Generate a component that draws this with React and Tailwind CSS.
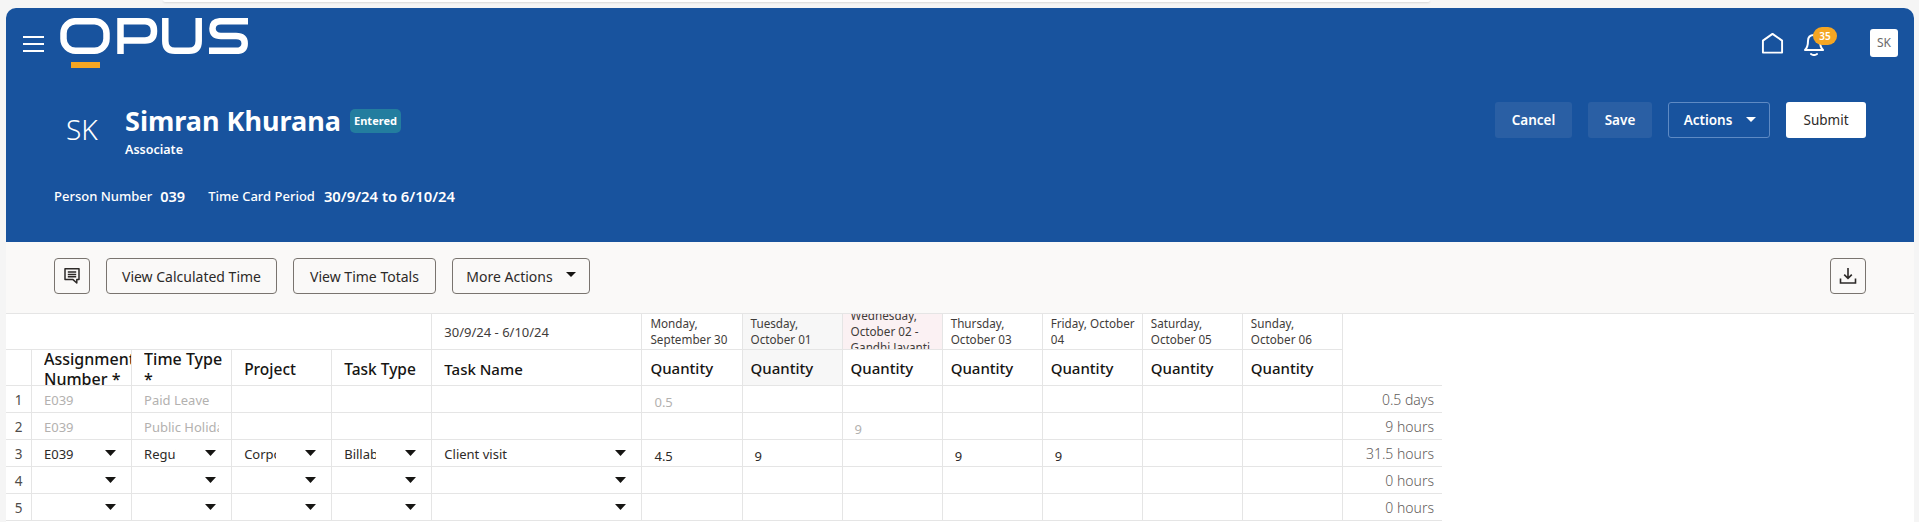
import React from "react";

const Caret = ({ className = "", w = 11, h = 6 }) => (
  <svg width={w} height={h} viewBox="0 0 11 6" preserveAspectRatio="none" className={className}>
    <path d="M0 0H11L5.5 6Z" fill="currentColor" />
  </svg>
);

const Logo = () => (
  <svg width="190" height="52" viewBox="0 0 190 52" fill="none">
    <g stroke="#ffffff" strokeWidth="6.5">
      <rect x="3.5" y="3.2" width="43" height="29.6" rx="12" />
      <path d="M60.5 36V3.2H85Q94 3.2 94 13Q94 22.5 85 22.5H60.5" />
      <path d="M105.3 0V23Q105.3 32.8 115 32.8H129Q138.7 32.8 138.7 23V0" />
      <path d="M188 3.2H161Q152.5 3.2 152.5 10.6Q152.5 18 161 18H176Q184.7 18 184.7 25.4Q184.7 32.8 176 32.8H149" />
    </g>
    <rect x="11" y="44" width="29" height="6" fill="#f5a623" />
  </svg>
);

const HeaderButton = ({ className, children }) => (
  <button className={`h-[36px] rounded-[3px] text-[13.5px] font-semibold flex items-center justify-center ${className}`}>
    {children}
  </button>
);

const ToolButton = ({ className = "", children }) => (
  <button className={`h-[36px] rounded-[4px] border border-[#79746f] bg-[#faf9f8] text-[14px] text-[#2d2a28] flex items-center justify-center ${className}`}>
    {children}
  </button>
);

const days = [
  { label: "Monday, September 30" },
  { label: "Tuesday, October 01", bg: "bg-[#f7f7f7]" },
  { label: "Wednesday, October 02 - Gandhi Jayanti", bg: "bg-[#fbf1f3]" },
  { label: "Thursday, October 03" },
  { label: "Friday, October 04" },
  { label: "Saturday, October 05" },
  { label: "Sunday, October 06" },
];

const rows = [
  { n: 1, ro: true, a: "E039", t: "Paid Leave", q: ["0.5", "", "", "", "", "", ""], total: "0.5 days" },
  { n: 2, ro: true, a: "E039", t: "Public Holiday", q: ["", "", "9", "", "", "", ""], total: "9 hours" },
  { n: 3, a: "E039", t: "Regular", p: "Corporate", k: "Billable", name: "Client visit", q: ["4.5", "9", "", "9", "9", "", ""], total: "31.5 hours" },
  { n: 4, a: "", t: "", p: "", k: "", name: "", q: ["", "", "", "", "", "", ""], total: "0 hours" },
  { n: 5, a: "", t: "", p: "", k: "", name: "", q: ["", "", "", "", "", "", ""], total: "0 hours" },
];

const line = "border-r border-b border-[#e5e5e5]";

const SelectCell = ({ value, textW }) => (
  <td className={`${line} p-0`}>
    <div className="h-[26px] pl-[12px] pr-[15px] flex items-center justify-between text-[13px] text-[#2d2a28]">
      <span className="block overflow-hidden whitespace-nowrap pt-[4px]" style={{ width: textW }}>{value}</span>
      <Caret className="text-[#161513] mb-[1px] shrink-0" />
    </div>
  </td>
);

const PlainCell = ({ value, width = "" }) => (
  <td className={`${line} p-0`}>
    <div className="h-[26px] px-[12px] pt-[4px] flex items-center text-[13px] text-[#b3b1af]">
      <span className={`block overflow-hidden whitespace-nowrap ${width}`}>{value}</span>
    </div>
  </td>
);

const Head = ({ children, size = "text-[15px]" }) => (
  <th className={`${line} p-0 text-left font-medium`}>
    <div className={`h-[35px] pl-[12px] pt-[2px] flex items-center ${size} leading-[20px] text-[#161513] overflow-hidden`}>
      <span>{children}</span>
    </div>
  </th>
);

export default function App() {
  return (
    <div className="w-full h-[522px] overflow-hidden bg-[#f5f5f5] pl-[6px] pr-[5px] text-white" style={{ fontFamily: '"Noto Sans", sans-serif' }}>
      <div className="h-[8px] pl-[157px]">
        <div className="w-[1267px] h-[2px] bg-white rounded-b-[6px] shadow-[0_1px_2px_rgba(0,0,0,0.12)]" />
      </div>
      <header className="h-[234px] bg-[#18539e] rounded-t-[10px] pr-[16px]">
        <div className="h-[62px] flex items-start">
          <div className="ml-[17px] mt-[28px] w-[21px] flex flex-col gap-[5px]">
            <span className="h-[2px] bg-white" />
            <span className="h-[2px] bg-white" />
            <span className="h-[2px] bg-white" />
          </div>
          <div className="ml-[16px] mt-[10px]">
            <Logo />
          </div>
          <div className="ml-auto mt-[21px] flex items-start">
            <svg width="23" height="22" viewBox="0 0 24 22" fill="none" stroke="#fff" strokeWidth="2" className="mt-[3px]">
              <path d="M2 21V8.5L12 1.5L22 8.5V21Z" strokeLinejoin="round" />
            </svg>
            <div className="relative ml-[20px] mr-[46px] w-[20px] h-[24px] mt-[3px]">
              <svg width="20" height="24" viewBox="0 0 20 24" fill="none" stroke="#fff" strokeWidth="2" strokeLinecap="round">
                <path d="M1 18C3 16 4 14 4 9C4 5 6 3 10 3C14 3 16 5 16 9C16 14 17 16 19 18Z" strokeLinejoin="round" />
                <path d="M7 22C9 23.4 11 23.4 13 22" />
              </svg>
              <span className="absolute left-[9px] top-[-5px] w-[24px] h-[18px] rounded-full bg-[#f5a623] text-white text-[10px] font-semibold flex items-center justify-center">35</span>
            </div>
            <div className="w-[28px] h-[28px] rounded-[3px] bg-white text-[#6b6b6b] text-[12px] flex items-center justify-center">SK</div>
          </div>
        </div>
        <div className="h-[94px] flex items-start pr-[32px]">
          <div className="ml-[44px] w-[75px] mt-[43px] pl-[16px] text-[28px] font-light leading-[32px]">SK</div>
          <div className="mt-[35px]">
            <div className="flex items-center">
              <h1 className="text-[27px] font-bold leading-[32px]">Simran Khurana</h1>
              <span className="ml-[9px] h-[24px] w-[51px] rounded-[5px] bg-[#237d9f] text-[11px] font-bold flex items-center justify-center">Entered</span>
            </div>
            <div className="text-[12.5px] font-semibold leading-[16px] mt-[5px]">Associate</div>
          </div>
          <div className="ml-auto mt-[32px] flex gap-[16px]">
            <HeaderButton className="w-[77px] bg-[#2a5fa4]">Cancel</HeaderButton>
            <HeaderButton className="w-[64px] bg-[#2a5fa4]">Save</HeaderButton>
            <HeaderButton className="w-[102px] border border-[#5e8ac4] gap-[14px] pl-[2px]">
              Actions <Caret className="text-white mb-[2px]" w={10} h={5} />
            </HeaderButton>
            <HeaderButton className="w-[80px] bg-white !text-[#2d2a28] !font-normal">Submit</HeaderButton>
          </div>
        </div>
        <div className="ml-[48px] mt-[20px] flex items-center text-[13px] leading-[24px] font-medium">
          <span>Person Number</span>
          <span className="ml-[8px] font-semibold text-[14.5px]">039</span>
          <span className="ml-[23px]">Time Card Period</span>
          <span className="ml-[9px] font-semibold text-[14.8px]">30/9/24 to 6/10/24</span>
        </div>
      </header>

      <section className="h-[72px] bg-[#faf9f8] border-b border-[#e5e5e5] flex items-start pt-[16px] pl-[48px] pr-[48px] gap-[16px]">
        <ToolButton className="w-[36px]">
          <svg width="18" height="18" viewBox="0 0 18 18" fill="none" stroke="#2d2a28" strokeWidth="1.5">
            <path d="M2 1.8H16V12.6H13.8V16L10 12.6H2Z" strokeLinejoin="round" />
            <path d="M4.8 5H13.2M4.8 7.4H13.2M4.8 9.8H13.2" />
          </svg>
        </ToolButton>
        <ToolButton className="w-[171px]">View Calculated Time</ToolButton>
        <ToolButton className="w-[143px]">View Time Totals</ToolButton>
        <ToolButton className="w-[138px] gap-[13px]">
          More Actions <Caret className="text-[#161513] mb-[4px]" w={10} h={5} />
        </ToolButton>
        <ToolButton className="ml-auto w-[36px]">
          <svg width="18" height="18" viewBox="0 0 18 18" fill="none" stroke="#2d2a28" strokeWidth="1.6">
            <path d="M9 1V11M5.2 7.6L9 11.4L12.8 7.6" />
            <path d="M1.5 11.5V16H16.5V11.5" />
          </svg>
        </ToolButton>
      </section>

      <div className="bg-white h-[210px]">
        <table className="table-fixed border-separate border-spacing-0 w-[1436px] text-[#2d2a28]">
          <colgroup>
            <col className="w-[26px]" />
            <col className="w-[100px]" />
            <col className="w-[100px]" />
            <col className="w-[100px]" />
            <col className="w-[100px]" />
            <col className="w-[210px]" />
            <col className="w-[100px]" />
            <col className="w-[100px]" />
            <col className="w-[100px]" />
            <col className="w-[100px]" />
            <col className="w-[100px]" />
            <col className="w-[100px]" />
            <col className="w-[100px]" />
            <col className="w-[99px]" />
          </colgroup>
          <thead>
            <tr>
              <th colSpan={5} className={`${line} p-0`}><div className="h-[35px]" /></th>
              <th className={`${line} p-0 text-left font-normal`}>
                <div className="h-[35px] pl-[12px] pt-[3px] flex items-center text-[13px] text-[#3f3c3a]">30/9/24 - 6/10/24</div>
              </th>
              {days.map((d) => (
                <th key={d.label} className={`${line} p-0 text-left font-normal ${d.bg || ""}`}>
                  <div className="h-[35px] pl-[8px] pr-[4px] pt-[1px] flex items-center overflow-hidden text-[11.7px] leading-[15.7px] text-[#3f3c3a]">
                    <span className="block">{d.label}</span>
                  </div>
                </th>
              ))}
              <th className="p-0" />
            </tr>
            <tr>
              <th className={`${line} p-0`}><div className="h-[35px]" /></th>
              <Head size="text-[16px]"><span className="block w-[87px] overflow-hidden">Assignment Number *</span></Head>
              <Head size="text-[16px]"><span className="block w-[84px] overflow-hidden">Time Type *</span></Head>
              <Head size="text-[15.5px]">Project</Head>
              <Head size="text-[15.5px]">Task Type</Head>
              <Head>Task Name</Head>
              {days.map((d) => (
                <th key={d.label} className={`${line} p-0 text-left font-medium ${d.label.startsWith("Tuesday") ? "bg-[#f7f7f7]" : ""}`}>
                  <div className="h-[35px] pl-[8px] pt-[2px] flex items-center text-[15px] text-[#161513]">Quantity</div>
                </th>
              ))}
              <th className="border-b border-[#e5e5e5] p-0" />
            </tr>
          </thead>
          <tbody>
            {rows.map((r) => (
              <tr key={r.n}>
                <td className={`${line} p-0`}>
                  <div className="h-[26px] pt-[2px] flex items-center justify-center text-[13.5px] text-[#4f4c4a]">{r.n}</div>
                </td>
                {r.ro ? (
                  <>
                    <PlainCell value={r.a} />
                    <PlainCell value={r.t} width="w-[75px]" />
                    <PlainCell value="" />
                    <PlainCell value="" />
                    <PlainCell value="" />
                  </>
                ) : (
                  <>
                    <SelectCell value={r.a} textW="50px" />
                    <SelectCell value={r.t} textW="32px" />
                    <SelectCell value={r.p} textW="32px" />
                    <SelectCell value={r.k} textW="32px" />
                    <SelectCell value={r.name} textW="150px" />
                  </>
                )}
                {r.q.map((v, i) => (
                  <td key={i} className={`${line} p-0`}>
                    <div className={`h-[26px] pl-[12px] pt-[7px] flex items-center text-[13px] ${r.ro ? "text-[#b3b1af]" : "text-[#2d2a28]"}`}>{v}</div>
                  </td>
                ))}
                <td className="border-b border-[#e5e5e5] p-0">
                  <div className="h-[26px] pr-[8px] pt-[1px] flex items-center justify-end text-[14px] font-light text-[#5f5c5a]">{r.total}</div>
                </td>
              </tr>
            ))}
          </tbody>
        </table>
      </div>
    </div>
  );
}
